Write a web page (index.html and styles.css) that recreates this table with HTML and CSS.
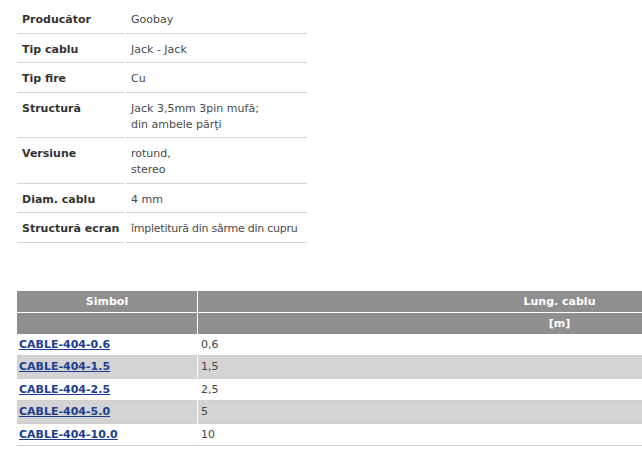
FILE: index.html
```html
<!DOCTYPE html>
<html lang="ro">
<head>
<meta charset="utf-8">
<title>Cablu Jack</title>
<link rel="stylesheet" href="styles.css">
</head>
<body>
<div class="page">
  <table class="specs">
    <colgroup><col class="c-label"><col class="c-value"></colgroup>
    <tr><th>Producător</th><td>Goobay</td></tr>
    <tr><th>Tip cablu</th><td>Jack - Jack</td></tr>
    <tr><th>Tip fire</th><td>Cu</td></tr>
    <tr><th>Structură</th><td>Jack 3,5mm 3pin mufă;<br>din ambele părţi</td></tr>
    <tr><th>Versiune</th><td>rotund,<br>stereo</td></tr>
    <tr><th>Diam. cablu</th><td>4 mm</td></tr>
    <tr><th>Structură ecran</th><td class="tight">împletitură din sârme din cupru</td></tr>
  </table>

  <table class="variants">
    <colgroup><col class="c-sym"><col class="c-len"></colgroup>
    <thead>
      <tr class="h1"><th>Simbol</th><th>Lung. cablu</th></tr>
      <tr class="h2"><th></th><th>[m]</th></tr>
    </thead>
    <tbody>
      <tr><td><a href="#">CABLE-404-0.6</a></td><td>0,6</td></tr>
      <tr class="alt"><td><a href="#">CABLE-404-1.5</a></td><td>1,5</td></tr>
      <tr><td><a href="#">CABLE-404-2.5</a></td><td>2,5</td></tr>
      <tr class="alt"><td><a href="#">CABLE-404-5.0</a></td><td>5</td></tr>
      <tr><td><a href="#">CABLE-404-10.0</a></td><td>10</td></tr>
    </tbody>
  </table>
</div>
</body>
</html>
```

FILE: styles.css
```css
html, body {
  margin: 0;
  padding: 0;
  background: #ffffff;
}

.page {
  width: 642px;
  height: 455px;
  overflow: hidden;
  font-family: "DejaVu Sans", Verdana, sans-serif;
  font-size: 11px;
  line-height: 16px;
  color: #444444;
}

.specs {
  margin: 4px 0 0 15px;
  border-collapse: separate;
  border-spacing: 2px 0;
  table-layout: fixed;
  width: 292px;
}

.specs .c-label { width: 107px; }
.specs .c-value { width: 181px; }

.specs th,
.specs td {
  text-align: left;
  vertical-align: top;
  padding: 8px 2px 4.5px 5px;
  border-bottom: 1px solid #d6d6d6;
}

.specs th {
  font-weight: bold;
  color: #333333;
  white-space: nowrap;
}

.specs td {
  color: #4a4a4a;
}

.specs td.tight {
  white-space: nowrap;
  letter-spacing: -0.25px;
}

.variants {
  margin: 48px 0 0 16px;
  border-collapse: separate;
  border-spacing: 1px 0;
  table-layout: fixed;
  width: 906px;
}

.variants .c-sym { width: 180px; }
.variants .c-len { width: 723px; }

.variants thead th {
  background: #8f8f8f;
  color: #ffffff;
  font-weight: bold;
  text-align: center;
  padding: 0;
}

.variants .h1 th {
  height: 20px;
  line-height: 21px;
  border-bottom: 1px solid #ffffff;
}

.variants .h2 th {
  height: 21px;
  line-height: 21px;
}

.variants tbody td {
  padding: 3px 3px 2.6px 2px;
  border-bottom: 1px solid #cfcfcf;
  color: #444444;
}

.variants tbody td + td {
  padding-left: 3px;
}

.variants .alt td {
  background: #d4d4d4;
}

.variants a {
  color: #1c3d90;
  font-weight: bold;
  text-decoration: underline;
}
```
